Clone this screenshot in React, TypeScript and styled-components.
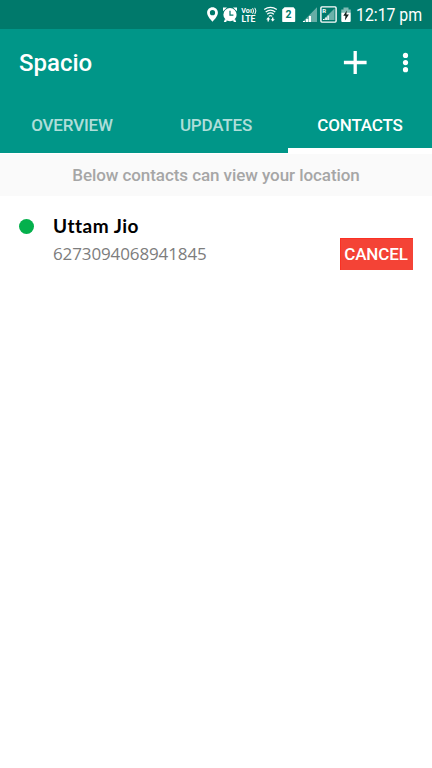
import React from 'react';
import styled, { createGlobalStyle } from 'styled-components';

const GlobalStyle = createGlobalStyle`
  * { box-sizing: border-box; }
  html, body { margin: 0; padding: 0; background: #fff; }
  body { font-family: Roboto, sans-serif; }
  button { font: inherit; border: 0; margin: 0; padding: 0; background: none; color: inherit; }
`;

const Screen = styled.div`
  width: 432px;
  height: 768px;
  display: flex;
  flex-direction: column;
  overflow: hidden;
  background: #fff;
`;

const StatusBar = styled.div`
  height: 29px;
  flex: none;
  display: flex;
  align-items: center;
  justify-content: flex-end;
  padding-right: 10px;
  background: #00796b;
  color: #fff;
`;

const StatusIcons = styled.svg`
  display: block;
  flex: none;
  width: 152px;
  height: 29px;
`;

const Clock = styled.time`
  width: 66px;
  margin-left: 4px;
  font-size: 18px;
  line-height: 29px;
  white-space: nowrap;
  transform: scaleX(0.88);
  transform-origin: 0 50%;
`;

const Header = styled.header`
  height: 124px;
  flex: none;
  display: flex;
  flex-direction: column;
  justify-content: space-between;
  background: #009688;
  color: #fff;
`;

const Toolbar = styled.div`
  height: 68px;
  display: flex;
  align-items: center;
  padding: 0 17px 0 19px;
`;

const Title = styled.h1`
  flex: 1;
  margin: 0;
  font-size: 24px;
  line-height: 28px;
  font-weight: 500;
`;

const IconButton = styled.button<{ $width: number }>`
  width: ${(p) => p.$width}px;
  height: 24px;
  margin-left: 26px;
  svg { display: block; overflow: visible; }
`;

const Tabs = styled.nav`
  height: 56px;
  display: grid;
  grid-template-columns: repeat(3, 1fr);
`;

const Tab = styled.button<{ $active?: boolean }>`
  height: 56px;
  padding: ${(p) => (p.$active ? '4px 0 0 0' : '0 0 1px 0')};
  border-bottom: ${(p) => (p.$active ? '5px solid #fff' : '0')};
  font-size: 17px;
  font-weight: 500;
  letter-spacing: -0.17px;
  color: ${(p) => (p.$active ? '#fff' : 'rgba(255, 255, 255, 0.7)')};
`;

const Notice = styled.p`
  height: 43px;
  flex: none;
  margin: 0;
  border-top: 1px solid #fff;
  background: #fafafa;
  color: #a6a6a6;
  font-size: 17px;
  font-weight: 500;
  line-height: 43px;
  letter-spacing: -0.07px;
  text-align: center;
`;

const ContactRow = styled.article`
  display: flex;
  padding: 16px 19px 0;
`;

const StatusDot = styled.span`
  width: 15px;
  height: 15px;
  margin-top: 7px;
  border-radius: 50%;
  background: #04b04c;
`;

const ContactText = styled.div`
  flex: 1;
  padding-left: 19px;
`;

const ContactName = styled.h2`
  margin: 0;
  font-family: Lato, sans-serif;
  font-size: 19px;
  line-height: 28px;
  font-weight: 700;
  letter-spacing: 0.5px;
  font-variant-ligatures: none;
  color: #000;
`;

const ContactNumber = styled.p`
  margin: 0;
  font-family: 'Open Sans', sans-serif;
  font-size: 17px;
  line-height: 28px;
  letter-spacing: -0.12px;
  color: #7d7d7d;
`;

const CancelButton = styled.button`
  && {
    width: 73px;
    height: 32px;
    margin-top: 26px;
    border: 1px solid #fb3023;
    border-width: 1px 0 0 1px;
    background: #f44336;
    color: #fff;
    font-size: 17px;
    font-weight: 500;
    letter-spacing: -0.1px;
    padding: 0 2px 1px 0;
  }
`;

export default function App() {
  return (
    <Screen>
      <GlobalStyle />
      <StatusBar>
        <StatusIcons viewBox="200 0 152 29" fill="#fff">
          <path fillRule="evenodd" d="M212.5 7.3c-3.1 0-5.4 2.4-5.4 5.5 0 3.9 5.4 8.9 5.4 8.9s5.4-5 5.4-8.9c0-3.1-2.3-5.5-5.4-5.5Zm0 2.8a2.6 2.6 0 1 1 0 5.2 2.6 2.6 0 0 1 0-5.2Z" />
          <circle cx="230" cy="14.7" r="6.6" />
          <path d="M223 11.2V7.4h4zM237 11.2V7.4h-4zM223.8 22l1.2-3 2.2 1.7-1.3 1.3zM236.2 22l-1.2-3-2.2 1.7 1.3 1.3z" />
          <path d="M230 10.8v4.4h3.4" fill="none" stroke="#00796b" strokeWidth="1.2" />
          <text x="241.3" y="13.4" fontFamily="Roboto" fontWeight="700" fontSize="7.2">Voı</text>
          <text x="241.5" y="22" fontFamily="Roboto" fontWeight="700" fontSize="8.6">LTE</text>
          <path d="M252.6 8.2q2 2.7 0 5.6M254.8 7.8q2.2 3.1 0 6.4" fill="none" stroke="#fff" strokeWidth="1" />
          <g fill="none" stroke="#fff" strokeWidth="1.2">
            <path d="M264.2 9.6c3.8-2.8 8.8-2.8 12.6 0M265.7 12c2.9-2.2 6.7-2.2 9.6 0M267.2 14.3c2-1.6 4.6-1.6 6.6 0M268.8 16.4c1-.8 2.4-.8 3.4 0" />
          </g>
          <path d="M268.3 17l2 2.4h-1.4v2h-1.4v-2h-1.3zM272.7 21.6l-2-2.4h1.3v-1.8h1.4v1.8h1.4z" />
          <path d="M284.5 7.3h9l1.7 2v11.9q0 .7-.7.7h-11.7q-.6 0-.6-.6V9.4z" />
          <text x="288.6" y="18.4" textAnchor="middle" fill="#00796b" fontFamily="Roboto" fontWeight="700" fontSize="10.5">2</text>
          <path d="M302.5 22L317 7.2V22z" opacity=".4" />
          <path d="M303 22v-1h2v1zM306 22v-3h2.3v3zM309 22v-6h2v6z" />
          <rect x="320.9" y="6.9" width="15.2" height="15.2" rx="1" fill="none" stroke="#fff" strokeWidth="1.4" />
          <text x="322.2" y="13.4" fontFamily="Roboto" fontWeight="700" fontSize="6">R</text>
          <path d="M323 20L334.5 8.5V20z" opacity=".42" />
          <path d="M323 20v-1h1.5v1zM325.3 20v-2.5h1.5v2.5zM327.5 20v-4.5h1.3v4.5z" />
          <path d="M343.5 7.4h5v2.1h-5zM341.3 9.5h9.4v3h-9.4z" opacity=".5" />
          <path d="M341.3 12.5h9.4v8.4q0 1-1 1h-7.4q-1 0-1-1z" />
          <path d="M346.8 10.5l-3.5 5.2h2.2l-.6 4.8 4-6h-2.5z" fill="#10201d" />
        </StatusIcons>
        <Clock>12:17 pm</Clock>
      </StatusBar>

      <Header>
        <Toolbar>
          <Title>Spacio</Title>
          <IconButton $width={24} aria-label="Add contact">
            <svg width="24" height="24" viewBox="0 0 24 24" fill="none" stroke="#fff" strokeWidth="3.3">
              <path d="M10.2 .1V22.9M-1.1 11.5H21.6" />
            </svg>
          </IconButton>
          <IconButton $width={20} aria-label="More options">
            <svg width="20" height="24" viewBox="0 0 20 24" fill="#fff">
              <circle cx="10.5" cy="4.4" r="2.6" />
              <circle cx="10.5" cy="11.6" r="2.6" />
              <circle cx="10.5" cy="18.7" r="2.6" />
            </svg>
          </IconButton>
        </Toolbar>
        <Tabs>
          <Tab>OVERVIEW</Tab>
          <Tab>UPDATES</Tab>
          <Tab $active>CONTACTS</Tab>
        </Tabs>
      </Header>

      <Notice>Below contacts can view your location</Notice>

      <ContactRow>
        <StatusDot />
        <ContactText>
          <ContactName>Uttam Jio</ContactName>
          <ContactNumber>6273094068941845</ContactNumber>
        </ContactText>
        <CancelButton>CANCEL</CancelButton>
      </ContactRow>
    </Screen>
  );
}
